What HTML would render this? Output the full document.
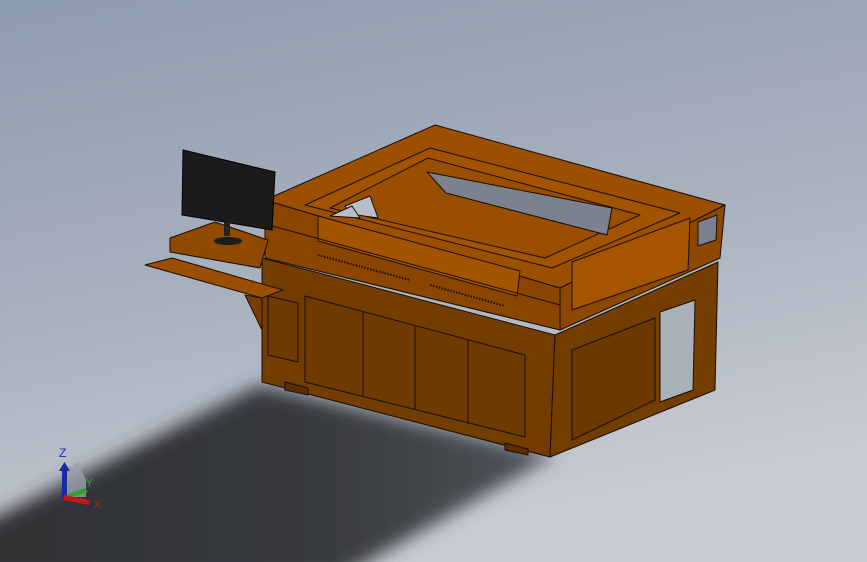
<!DOCTYPE html>
<html><head><meta charset="utf-8"><style>
html,body{margin:0;padding:0;width:867px;height:562px;overflow:hidden;background:#9aa4b4}
svg{display:block}
</style></head><body>
<svg width="867" height="562" viewBox="0 0 867 562" xmlns="http://www.w3.org/2000/svg">
<defs>
<linearGradient id="bg" x1="0" y1="0" x2="0.3" y2="1">
<stop offset="0" stop-color="#8d9bb0"/>
<stop offset="0.55" stop-color="#a9b1be"/>
<stop offset="1" stop-color="#c7cbd2"/>
</linearGradient>
<linearGradient id="sh" x1="0" y1="0" x2="1" y2="0">
<stop offset="0" stop-color="#2f3034"/>
<stop offset="0.6" stop-color="#383a3f"/>
<stop offset="1" stop-color="#50545b"/>
</linearGradient>
<filter id="bl" x="-20%" y="-20%" width="140%" height="140%"><feGaussianBlur stdDeviation="9"/></filter>
</defs>
<rect width="867" height="562" fill="url(#bg)"/>
<polygon points="-30,530 260,385 555,455 335,580 -30,580" fill="url(#sh)" filter="url(#bl)"/>
<g stroke="#1a0d00" stroke-width="1" stroke-linejoin="round">
<!-- lower cabinet -->
<polygon points="262,258 555,335 550,457 262,382" fill="#733c00"/>
<polygon points="555,335 718,262 715,390 550,457" fill="#743d00"/>
<polygon points="572,350 655,318 655,400 572,440" fill="#6c3800"/>
<polygon points="660,312 695,300 693,390 660,402" fill="#aab0ba"/>
<polygon points="305,296 525,355 525,437 305,382" fill="#6f3a00"/>
<line x1="363" y1="312" x2="363" y2="397"/><line x1="415" y1="326" x2="415" y2="410"/><line x1="468" y1="340" x2="468" y2="424"/>
<polygon points="268,296 298,303 298,362 268,355" fill="#6f3a00"/>
<polygon points="285,382 308,388 308,395 285,390" fill="#5a2e00"/>
<polygon points="505,443 528,449 528,455 505,450" fill="#5a2e00"/>
<!-- upper body -->
<polygon points="265,200 560,288 560,330 265,258" fill="#8a4600"/>
<polygon points="560,288 725,205 720,258 560,330" fill="#8c4700"/>
<polygon points="265,200 435,125 725,205 560,288" fill="#9c4f00"/>
<polygon points="318,216 520,271 517,296 318,241" fill="#a35400"/>
<polygon points="572,262 690,218 688,270 572,310" fill="#a55500"/>
<polygon points="305,205 430,148 680,213 552,268" fill="#a25300"/>
<polygon points="330,208 428,158 640,215 545,258" fill="#9a4e00"/>
<polygon points="427,172 612,208 607,235 446,193" fill="#7c8190"/>
<polygon points="345,206 370,196 378,218 350,214" fill="#b8bec8"/>
<polygon points="330,216 352,206 360,218" fill="#b8bec8"/>
<polygon points="698,222 717,215 716,240 698,246" fill="#7c8190"/>
<line x1="265" y1="224" x2="560" y2="305"/>
<line x1="318" y1="255" x2="410" y2="280" stroke-dasharray="1.5 1.5" stroke-width="2"/>
<line x1="430" y1="285" x2="505" y2="306" stroke-dasharray="1.5 1.5" stroke-width="2"/>
<!-- desk -->
<polygon points="170,238 215,222 268,240 260,268 170,252" fill="#8f4a00"/>
<polygon points="145,265 172,258 283,290 262,298" fill="#9a4e00"/>
<polygon points="245,295 262,298 262,330" fill="#7a3f00"/>
</g>
<!-- monitor -->
<polygon points="183,150 275,172 272,230 182,215" fill="#1b1b1b" stroke="#000"/>
<rect x="224" y="222" width="6" height="14" fill="#222"/>
<ellipse cx="228" cy="241" rx="14" ry="4" fill="#1c1c1c"/>
<!-- triad -->
<g font-family="Liberation Sans, sans-serif" font-size="12">
<polygon points="66,470 78,462 86,480 86,497 66,497" fill="#9a9fa8" opacity="0.8"/>
<rect x="62" y="470" width="5" height="28" fill="#1a2aa0"/>
<polygon points="59,471 64.5,462 70,471" fill="#1a2aa0"/>
<polygon points="66,495 85,488 88,492 68,498" fill="#2da22d"/>
<polygon points="64,495 90,500 89,505 64,500" fill="#c01818"/>
<text x="59" y="457" fill="#1a2aa0">Z</text>
<text x="86" y="486" fill="#2db52d" font-size="10">Y</text>
<text x="94" y="508" fill="#d01818" font-size="11">X</text>
</g>
</svg>
</body></html>
